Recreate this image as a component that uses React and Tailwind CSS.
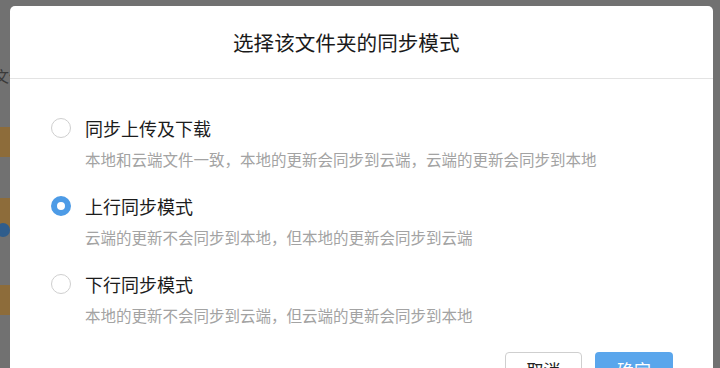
import React, { useState } from 'react';

const font = { fontFamily: '"Noto Sans CJK SC", "Noto Sans", sans-serif' };

const MODES = [
  { id: 'both', label: '同步上传及下载', desc: '本地和云端文件一致，本地的更新会同步到云端，云端的更新会同步到本地' },
  { id: 'up', label: '上行同步模式', desc: '云端的更新不会同步到本地，但本地的更新会同步到云端' },
  { id: 'down', label: '下行同步模式', desc: '本地的更新不会同步到云端，但云端的更新会同步到本地' },
];

function Radio({ checked }) {
  return checked ? (
    <span className="w-[20px] h-[20px] rounded-full border-[6px] border-[#4d9be6] bg-white shrink-0" />
  ) : (
    <span className="w-[20px] h-[20px] rounded-full border-[1.5px] border-[#cfcfcf] bg-white shrink-0" />
  );
}

export default function App() {
  const [mode, setMode] = useState('up');

  return (
    <div className="relative w-[720px] h-[368px] overflow-hidden bg-[#717171]" style={font}>
      {/* dimmed app behind the dialog */}
      <div className="flex flex-col h-full">
        <div className="flex items-end gap-[60px] h-[6px] text-[15px] leading-[16px] text-[#3d3d3d] whitespace-nowrap -mt-[6px]">
          <span className="text-[#3a4f6a] -ml-[14px]">管理同步</span>
          <span>⇂ 全部暂停</span>
          <span>○ 全部开始</span>
          <span>⇅ 清空记录</span>
        </div>
        <div className="w-[10px] flex flex-col mt-[68px]">
          <span className="text-[15px] leading-[16px] text-[#3a3a3a] -ml-[6px] whitespace-nowrap">文件</span>
          <div className="h-[30px] mt-[43px] bg-[#8d6c3a]" />
          <div className="h-[30px] mt-[41px] bg-[#8d6c3a] relative">
            <span className="absolute left-[-4px] top-[25px] w-[14px] h-[14px] rounded-full bg-[#2f5d8c]" />
          </div>
          <div className="h-[30px] mt-[57px] bg-[#8d6c3a]" />
        </div>
      </div>

      {/* modal */}
      <div className="absolute inset-0 pt-[6px] pl-[10px] pr-[7px]">
        <div className="bg-white rounded-t-[5px] h-full flex flex-col">
          <div className="h-[73px] shrink-0 border-b border-[#e3e3e3] flex items-center pl-[223px]">
            <span className="text-[20.6px] text-[#1a1a1a]">选择该文件夹的同步模式</span>
          </div>

          <div className="flex flex-col shrink-0 gap-[23px] pt-[36px] pl-[41px]">
            {MODES.map((m) => (
              <button key={m.id} onClick={() => setMode(m.id)} className="flex flex-col text-left">
                <div className="flex items-center gap-[14px] h-[26px]">
                  <Radio checked={mode === m.id} />
                  <span className="text-[18px] leading-[26px] text-[#1c1c1c]">{m.label}</span>
                </div>
                <span className="mt-[7px] pl-[34px] text-[15.5px] leading-[22px] text-[#a3a3a3]">{m.desc}</span>
              </button>
            ))}
          </div>

          <div className="flex shrink-0 justify-end gap-[13px] pr-[40px] mt-[26px]">
            <button className="w-[77px] h-[36px] rounded-[4px] border border-[#cfcfcf] bg-white text-[17px] text-[#222]">取消</button>
            <button className="w-[78px] h-[36px] rounded-[4px] bg-[#5aa6ec] text-[17px] text-white">确定</button>
          </div>
        </div>
      </div>
    </div>
  );
}
